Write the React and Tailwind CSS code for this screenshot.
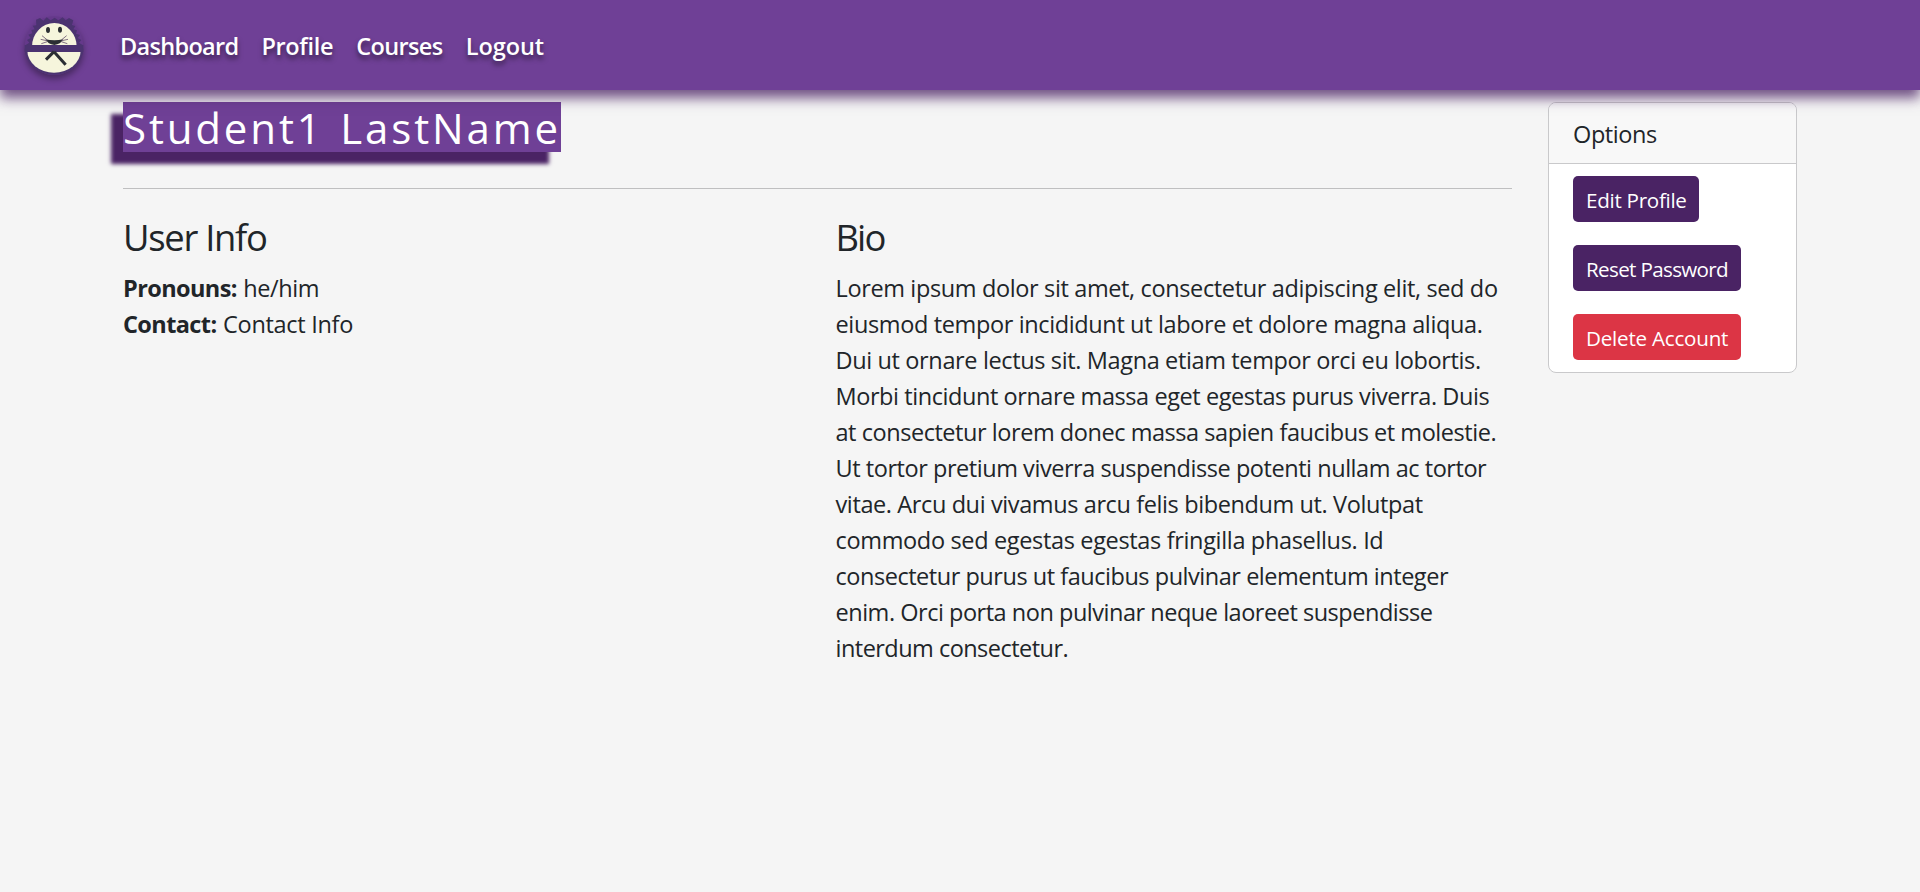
const bio = [
  ["Lorem ipsum dolor sit amet, consectetur adipiscing elit, sed do", "tracking-[-0.366px]"],
  ["eiusmod tempor incididunt ut labore et dolore magna aliqua.", "tracking-[-0.368px]"],
  ["Dui ut ornare lectus sit. Magna etiam tempor orci eu lobortis.", "tracking-[-0.365px]"],
  ["Morbi tincidunt ornare massa eget egestas purus viverra. Duis", "tracking-[-0.43px]"],
  ["at consectetur lorem donec massa sapien faucibus et molestie.", "tracking-[-0.45px]"],
  ["Ut tortor pretium viverra suspendisse potenti nullam ac tortor", "tracking-[-0.45px]"],
  ["vitae. Arcu dui vivamus arcu felis bibendum ut. Volutpat", "tracking-[-0.39px]"],
  ["commodo sed egestas egestas fringilla phasellus. Id", "tracking-[-0.34px]"],
  ["consectetur purus ut faucibus pulvinar elementum integer", "tracking-[-0.465px]"],
  ["enim. Orci porta non pulvinar neque laoreet suspendisse", "tracking-[-0.475px]"],
  ["interdum consectetur.", "tracking-[-0.53px]"],
];

const links = [
  ["Dashboard", "tracking-[-0.68px]"],
  ["Profile", "tracking-[-0.35px]"],
  ["Courses", "tracking-[-0.6px]"],
  ["Logout", "tracking-[-0.05px]"],
];

const options = [
  ["Edit Profile", "w-[126px] bg-[#4a2364] tracking-[-0.28px]"],
  ["Reset Password", "w-[168px] bg-[#4a2364] tracking-[-0.65px]"],
  ["Delete Account", "w-[168px] bg-[#dc3545] tracking-[-0.22px]"],
];

function Logo() {
  return (
    <svg viewBox="0 0 204 210" className="mt-1 h-[70px] w-[68px] shrink-0 drop-shadow-[0_4px_3px_rgba(0,0,0,0.35)]">
      <circle cx="102" cy="101" r="88" fill="#65398b" />
      <path
        d="M16 100 L28 92 L21 84 L32 78 L25 68 L37 64 L34 54 L44 52 L38 41 L49 40 L48 23 L60 18 L70 26 L80 16 L92 25 L104 17 L115 25 L128 16 L137 25 L147 18 L160 25 L156 39 L166 42 L160 52 L171 55 L168 65 L180 69 L173 78 L184 84 L177 92 L189 100 Z"
        fill="#4b3370"
      />
      <path d="M36 104 A67 71 0 0 1 170 104 Z" fill="#f6f5dc" />
      <path d="M14 110 A88 78 0 0 0 190 110 Z" fill="#4b3370" />
      <path d="M22 116 A80 66 0 0 0 182 116 Z" fill="#f6f5dc" />
      <rect x="14" y="99" width="176" height="21" fill="#4b3370" />
      <ellipse cx="84" cy="54" rx="6" ry="9" fill="#2b2e33" />
      <ellipse cx="120" cy="53" rx="6" ry="9" fill="#2b2e33" />
      <path d="M76 82 Q103 88 130 82 Q122 97 103 99 Q84 97 76 82 Z" fill="#2b2e33" />
      <path
        d="M82 84 L66 71 M80 86 L62 82 M82 89 L64 95 M124 84 L140 71 M126 86 L144 82 M124 89 L142 95"
        stroke="#6a5570"
        strokeWidth="2.5"
      />
      <path d="M102 119 L78 143 M102 119 L137 158" stroke="#2b2e33" strokeWidth="9" />
    </svg>
  );
}

export default function App() {
  return (
    <div className="min-h-screen overflow-x-hidden bg-[#f5f5f5] font-['Open_Sans',sans-serif] text-[23.5px] leading-9 text-[#212529]">
      <nav className="relative z-10 flex h-[90px] items-center bg-[#6f4096] pl-5 shadow-[0_8px_12px_rgba(74,35,100,0.78)]">
        <Logo />
        <ul className="mt-0.5 ml-8 flex gap-[23px] font-semibold text-white [text-shadow:0_4px_5px_rgba(0,0,0,0.5)]">
          {links.map(([label, cls]) => (
            <li key={label} className={cls}>{label}</li>
          ))}
        </ul>
      </nav>
      <div className="flex items-start pt-3 pl-[123px]">
        <main className="w-[1389px]">
          <h1 className="h-[50px] w-[438px] bg-[#6f4096] text-[42px] leading-[51px] tracking-[2.85px] whitespace-nowrap text-white shadow-[-12px_12px_4px_#4a2364] [word-spacing:3px]">
            Student1 LastName
          </h1>
          <hr className="mt-9 border-[#bfbfc0]" />
          <div className="mt-6 flex">
            <section className="w-[712.5px]">
              <h2 className="mb-3.5 h-[43px] text-[36.4px] leading-[48px] tracking-[-1.3px]">User Info</h2>
              <p><b className="tracking-[-0.6px]">Pronouns: </b><span className="ml-px tracking-[-0.45px]">he/him</span></p>
              <p><b className="tracking-[-0.6px]">Contact: </b><span className="ml-px tracking-[-0.3px]">Contact Info</span></p>
            </section>
            <section>
              <h2 className="mb-3.5 h-[43px] text-[36.4px] leading-[48px] tracking-[-1.9px]">Bio</h2>
              <p>
                {bio.map(([line, cls]) => (
                  <span key={line} className={"block whitespace-nowrap " + cls}>{line}</span>
                ))}
              </p>
            </section>
          </div>
        </main>
        <aside className="ml-9 w-[249px] overflow-hidden rounded-lg border border-[#c9c9cb] bg-white">
          <h3 className="h-[61px] border-b border-[#c9c9cb] bg-[#f8f8f8] pt-[13px] pl-6 tracking-[-0.4px]">Options</h3>
          <div className="flex flex-col gap-[23px] py-3 pl-6">
            {options.map(([label, cls]) => (
              <button key={label} className={"h-[46px] rounded-[5px] pl-[13px] pt-0.5 text-left text-[20.6px] whitespace-nowrap text-white " + cls}>
                {label}
              </button>
            ))}
          </div>
        </aside>
      </div>
    </div>
  );
}
